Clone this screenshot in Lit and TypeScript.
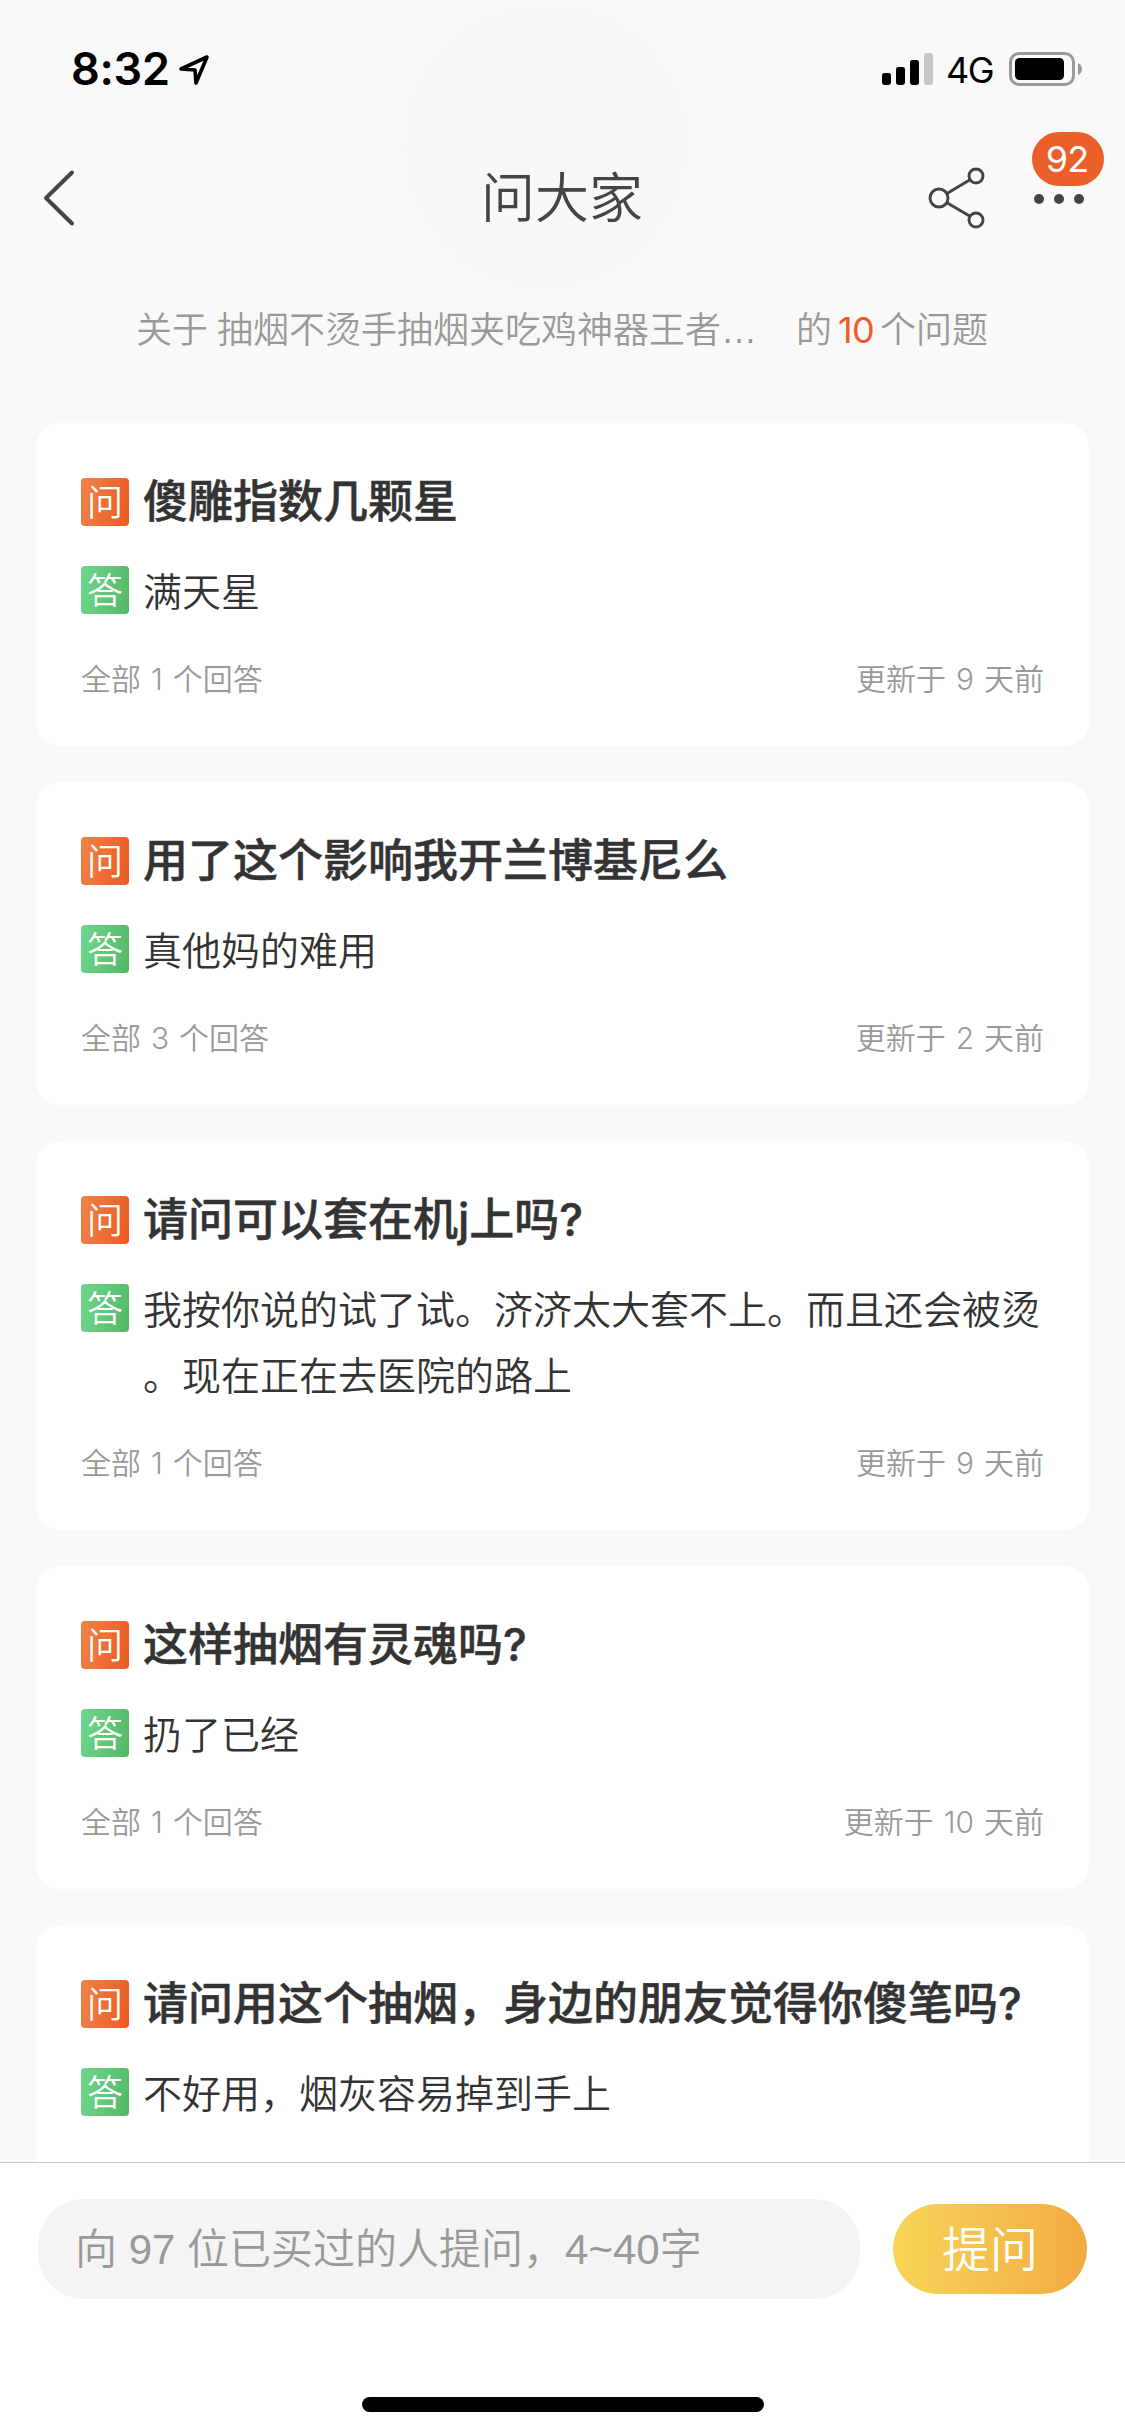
import { LitElement, html, css, svg } from "lit";
import { customElement, property } from "lit/decorators.js";

interface Question {
  title: string;
  answer: string;
  count?: number;
  days?: number;
}

const QUESTIONS: Question[] = [
  { title: "傻雕指数几颗星", answer: "满天星", count: 1, days: 9 },
  { title: "用了这个影响我开兰博基尼么", answer: "真他妈的难用", count: 3, days: 2 },
  { title: "请问可以套在机j上吗?", answer: "我按你说的试了试。济济太大套不上。而且还会被烫。现在正在去医院的路上", count: 1, days: 9 },
  { title: "这样抽烟有灵魂吗?", answer: "扔了已经", count: 1, days: 10 },
  { title: "请问用这个抽烟，身边的朋友觉得你傻笔吗?", answer: "不好用，烟灰容易掉到手上" },
];

const BARS = [12, 18, 25, 32];

@customElement("status-bar")
class StatusBar extends LitElement {
  static styles = css`
    :host { display: flex; height: 132px; box-sizing: border-box; padding: 49px 43px 0 71px; align-items: flex-start; justify-content: space-between; color: #000; font-family: Inter, "Liberation Sans", sans-serif; }
    .left, .right { display: flex; align-items: center; height: 40px; }
    .time { font-size: 45px; font-weight: 600; line-height: 40px; letter-spacing: -0.3px; }
    .arrow { margin-left: 8px; }
    .net { font-size: 36px; font-weight: 400; line-height: 40px; margin: 2px 0 0 12px; letter-spacing: -1.4px; width: 51px; }
    .battery { margin-left: 12px; }
    svg { display: block; }
  `;
  render() {
    return html`
      <div class="left">
        <span class="time">8:32</span>
        <svg class="arrow" width="32" height="34" viewBox="0 0 32 34"><path d="M3 17 L29 5 L18 31 L17 18 Z" fill="none" stroke="#000" stroke-width="3.6" stroke-linejoin="round"/></svg>
      </div>
      <div class="right">
        <svg width="52" height="34" viewBox="0 0 52 34">
          ${BARS.map((h, i) => svg`<rect x=${i * 14} y=${33 - h} width="9" height=${h} rx="2.4" fill=${i === 3 ? "#c7c7c7" : "#000"}/>`)}
        </svg>
        <span class="net">4G</span>
        <svg class="battery" width="73" height="34" viewBox="0 0 73 34">
          <rect x="1.5" y="1.5" width="63" height="31" rx="8.5" fill="none" stroke="#999" stroke-width="3"/>
          <rect x="6" y="6" width="49" height="22" rx="4.5"/>
          <path d="M69 11 Q73 13 73 17 Q73 21 69 23 Z" fill="#999"/>
        </svg>
      </div>
    `;
  }
}

@customElement("nav-bar")
class NavBar extends LitElement {
  static styles = css`
    :host { display: grid; grid-template-columns: 1fr auto 1fr; height: 132px; align-items: center; padding: 0 37px 0 42px; }
    .title { font: 350 54px/80px "Noto Sans CJK SC", sans-serif; color: #444; margin: -6px 3px 0 -3px; }
    .tools { display: flex; justify-content: flex-end; align-items: center; gap: 49px; }
    .more { position: relative; display: flex; gap: 10px; padding-right: 4px; margin-top: 2px; }
    .dot { width: 10px; height: 10px; border-radius: 50%; background: #444; }
    .count { position: absolute; left: -2px; top: -62px; width: 72px; height: 54px; border-radius: 27px; background: #eb5f2b; color: #fff; font: 400 36px/55px Inter, sans-serif; letter-spacing: -1px; text-align: center; text-indent: -2px; }
    svg { display: block; }
  `;
  render() {
    return html`
      <svg width="34" height="60" viewBox="0 0 34 60"><path d="M30 4.5 L4 30 L30 55.5" fill="none" stroke="#444" stroke-width="4" stroke-linecap="round" stroke-linejoin="round"/></svg>
      <div class="title">问大家</div>
      <div class="tools">
        <svg width="57" height="62" viewBox="0 0 57 62" fill="none" stroke="#444" stroke-width="2.9">
          <circle cx="11" cy="31" r="9"/><circle cx="48" cy="9" r="7"/><circle cx="48" cy="53" r="7"/>
          <path d="M19 26.5 L42 12.8 M19 35.8 L42 49.2"/>
        </svg>
        <div class="more"><span class="dot"></span><span class="dot"></span><span class="dot"></span><span class="count">92</span></div>
      </div>
    `;
  }
}

@customElement("question-card")
class QuestionCard extends LitElement {
  @property({ attribute: false }) item!: Question;
  static styles = css`
    :host { display: block; flex: none; box-sizing: border-box; padding: 46px 45px 44px; border-radius: 24px; background: #fff; font-family: "Liberation Sans", "Noto Sans CJK SC", sans-serif; font-weight: 350; color: #333; }
    .row { display: flex; gap: 14px; align-items: flex-start; }
    .row + .row { margin-top: 22px; }
    .tag { flex: none; width: 48px; height: 48px; margin-top: 9px; border-radius: 4px; color: #fff; text-align: center; font-size: 36px; line-height: 51px; }
    .ask { background: linear-gradient(100deg, #f08449, #ea5a23); }
    .reply { background: linear-gradient(100deg, #6fd78c, #54b767); }
    .question { margin: 0; font-family: Inter, "Noto Sans CJK SC", sans-serif; font-size: 45px; line-height: 66px; font-weight: 500; -webkit-text-stroke: 0.5px #333; white-space: nowrap; }
    .answer { margin: 3px 0 -3px; font-size: 39px; line-height: 66px; line-break: anywhere; }
    .meta { display: flex; justify-content: space-between; margin-top: 33px; height: 46px; font-family: Inter, "Noto Sans CJK SC", sans-serif; line-height: 46px; font-size: 30px; color: #999; word-spacing: 1.5px; }
  `;
  render() {
    const q = this.item;
    return html`
      <div class="row"><span class="tag ask">问</span><div class="question">${q.title}</div></div>
      <div class="row"><span class="tag reply">答</span><div class="answer">${q.answer}</div></div>
      <div class="meta">${q.count ? html`<span>全部 ${q.count} 个回答</span><span>更新于 ${q.days} 天前</span>` : ""}</div>
    `;
  }
}

@customElement("ask-bar")
class AskBar extends LitElement {
  static styles = css`
    :host { display: flex; flex-direction: column; align-items: center; flex: none; height: 274px; box-sizing: border-box; border-top: 1px solid #ccc; background: #fff; font-family: "Liberation Sans", "Noto Sans CJK SC", sans-serif; font-weight: 350; }
    .form { display: flex; align-items: center; gap: 33px; width: 100%; box-sizing: border-box; padding: 36px 38px 0; }
    .input { flex: 1; height: 100px; border-radius: 46px; background: #f4f4f4; color: #999; font-size: 42px; line-height: 101px; padding-left: 37px; box-sizing: border-box; white-space: nowrap; }
    .send { width: 194px; height: 90px; border-radius: 45px; background: linear-gradient(90deg, #f7d558, #f2ab41); color: #fff; font-size: 48px; line-height: 93px; text-align: center; }
    .home { width: 402px; height: 15px; margin-top: 98px; border-radius: 8px; background: #000; }
  `;
  render() {
    return html`
      <div class="form"><div class="input">向 97 位已买过的人提问，4~40字</div><div class="send">提问</div></div>
      <div class="home"></div>
    `;
  }
}

@customElement("app-root")
class AppRoot extends LitElement {
  static styles = css`
    :host { display: flex; flex-direction: column; width: 1125px; height: 2436px; overflow: hidden; background: radial-gradient(circle at 547px 145px, #f7f7f7 0, #f9f9f9 250px); }
    .about { display: flex; box-sizing: border-box; height: 159px; padding: 43px 0 0 136px; font: 350 36px/48px "Liberation Sans", "Noto Sans CJK SC", sans-serif; color: #999; white-space: pre; }
    .product { margin: 0 39px 0 9px; }
    .total { color: #f05b24; margin: -1px 5px 0 6px; font-family: Inter, sans-serif; font-weight: 400; letter-spacing: -0.8px; width: 37px; }
    .list { flex: 1; min-height: 0; overflow: hidden; display: flex; flex-direction: column; gap: 36px; padding: 0 36px; }
  `;
  render() {
    return html`
      <status-bar></status-bar>
      <nav-bar></nav-bar>
      <div class="about"><span>关于</span><span class="product">抽烟不烫手抽烟夹吃鸡神器王者…</span><span>的</span><span class="total">10</span><span>个问题</span></div>
      <div class="list">${QUESTIONS.map((q) => html`<question-card .item=${q}></question-card>`)}</div>
      <ask-bar></ask-bar>
    `;
  }
}
